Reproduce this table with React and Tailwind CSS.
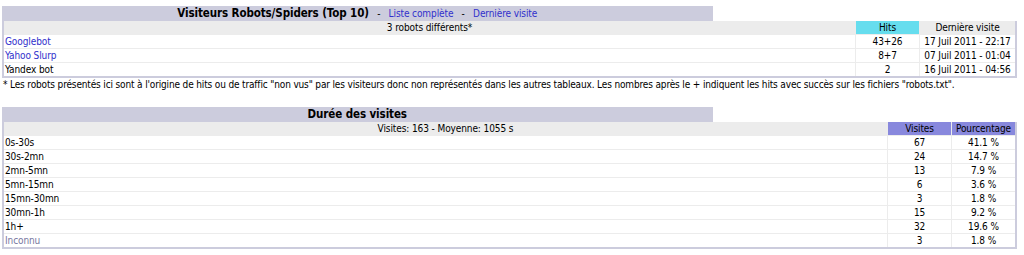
import React from "react";

const font = { fontFamily: '"DejaVu Sans Condensed", "DejaVu Sans", Verdana, sans-serif' };

const robots = [
  { name: "Googlebot", link: true, hits: "43+26", date: "17 Juil 2011 - 22:17" },
  { name: "Yahoo Slurp", link: true, hits: "8+7", date: "07 Juil 2011 - 01:04" },
  { name: "Yandex bot", link: false, hits: "2", date: "16 Juil 2011 - 04:56" },
];

const durations = [
  ["0s-30s", "67", "41.1 %"],
  ["30s-2mn", "24", "14.7 %"],
  ["2mn-5mn", "13", "7.9 %"],
  ["5mn-15mn", "6", "3.6 %"],
  ["15mn-30mn", "3", "1.8 %"],
  ["30mn-1h", "15", "9.2 %"],
  ["1h+", "32", "19.6 %"],
  ["Inconnu", "3", "1.8 %", true],
];

function Title({ children }) {
  return (
    <div className="flex h-[15px]">
      <div className="w-[70%] bg-[#ccccdd] text-center text-[11.5px] font-bold leading-[15px] tracking-[-0.1px] text-black whitespace-nowrap">
        {children}
      </div>
      <div className="flex-1 bg-white" />
    </div>
  );
}

export default function App() {
  return (
    <div className="bg-white w-[1024px] h-[255px] overflow-hidden text-[10px] tracking-[-0.1px] text-black" style={font}>
      <div className="ml-[2px] mt-[6px] w-[1015px]">
        <Title>
          Visiteurs Robots/Spiders (Top 10)
          <span className="font-normal text-[10px]">
            {" "}&nbsp; - &nbsp; <span className="text-[#3030cc]">Liste complète</span> &nbsp; - &nbsp;{" "}
            <span className="text-[#3030cc]">Dernière visite</span>
          </span>
        </Title>
        <div className="bg-[#ccccdd] px-[2px] pb-[2px]">
          <div className="bg-white">
            <div className="grid grid-cols-[1fr_64px_96px] h-[13px] bg-[#ececec] leading-[13px] whitespace-nowrap">
              <div className="text-center">3 robots différents*</div>
              <div className="border-l border-[#ececec] bg-[#66ddee] text-center">Hits</div>
              <div className="border-l border-[#ececec] text-center">Dernière visite</div>
            </div>
            {robots.map((r) => (
              <div key={r.name} className="grid grid-cols-[1fr_64px_96px] h-[14px] border-t border-[#ececec] leading-[13px] whitespace-nowrap">
                <div className={"pl-[1px] " + (r.link ? "text-[#3030cc]" : "")}>{r.name}</div>
                <div className="border-l border-[#ececec] text-center">{r.hits}</div>
                <div className="border-l border-[#ececec] text-center">{r.date}</div>
              </div>
            ))}
          </div>
        </div>
      </div>
      <div className="ml-[3px] leading-[13px] tracking-[-0.15px] whitespace-nowrap">
        * Les robots présentés ici sont à l'origine de hits ou de traffic "non vus" par les visiteurs donc non représentés dans les autres tableaux. Les nombres après le + indiquent les hits avec succès sur les fichiers "robots.txt".
      </div>
      <div className="ml-[2px] mt-[16px] w-[1015px]">
        <Title>Durée des visites</Title>
        <div className="bg-[#ccccdd] px-[2px] pb-[2px]">
          <div className="bg-white">
            <div className="grid grid-cols-[1fr_64px_64px] h-[13px] bg-[#ececec] leading-[13px] whitespace-nowrap">
              <div className="text-center">Visites: 163 - Moyenne: 1055 s</div>
              <div className="border-l border-[#ececec] bg-[#8888dd] text-center">Visites</div>
              <div className="border-l border-[#ececec] bg-[#8888dd] text-center">Pourcentage</div>
            </div>
            {durations.map(([label, v, p, gray]) => (
              <div key={label} className="grid grid-cols-[1fr_64px_64px] h-[14px] border-t border-[#ececec] leading-[13px] whitespace-nowrap">
                <div className={"pl-[1px] " + (gray ? "text-[#7777a0]" : "")}>{label}</div>
                <div className="border-l border-[#ececec] text-center">{v}</div>
                <div className="border-l border-[#ececec] text-center">{p}</div>
              </div>
            ))}
          </div>
        </div>
      </div>
    </div>
  );
}
